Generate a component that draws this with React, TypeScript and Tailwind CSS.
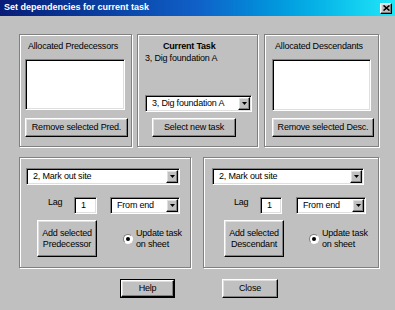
import React from 'react';

const sunken =
  'bg-white border border-t-[#808080] border-l-[#808080] border-r-white border-b-white shadow-[inset_1px_1px_0_#000,inset_-1px_-1px_0_#dfdfdf]';
const raised =
  'bg-[#c0c0c0] border border-t-white border-l-white border-r-black border-b-black shadow-[inset_-1px_-1px_0_#808080,inset_1px_1px_0_#dfdfdf]';
const frame = 'border border-[#808080] shadow-[inset_1px_1px_0_#fff,1px_1px_0_#fff]';

const Combo = ({ value, className }: { value: string; className: string }) => (
  <div className={`${sunken} flex items-stretch p-[1px] ${className}`}>
    <span className="flex-1 pl-[5px] flex items-center whitespace-nowrap overflow-hidden">{value}</span>
    <span className={`${raised} w-[12px] flex items-center justify-center`}>
      <svg width="5" height="3" viewBox="0 0 5 3">
        <path d="M0 0h5L2.5 3z" fill="#000" />
      </svg>
    </span>
  </div>
);

const Button = ({ label, className }: { label: React.ReactNode; className: string }) => (
  <div className={`${raised} flex items-center justify-center text-center leading-[11px] ${className}`}>
    {label}
  </div>
);

const Radio = () => (
  <span className="w-[10px] h-[10px] rounded-full bg-white border border-t-[#808080] border-l-[#808080] border-r-white border-b-white flex items-center justify-center shrink-0">
    <span className="w-[4px] h-[4px] rounded-full bg-black" />
  </span>
);

const AddBlock = ({
  kind,
  pads,
}: {
  kind: string;
  pads: { combo: string; comboW: string; lag: string; box: string; gap: string; btn: string; radio: string };
}) => (
  <div className="flex flex-col">
    <Combo value="2, Mark out site" className={`mt-[10px] h-[17px] ${pads.combo} ${pads.comboW}`} />
    <div className="flex items-start mt-[12px]">
      <span className={`${pads.lag} w-[26px] leading-[11px]`}>Lag</span>
      <div className={`${sunken} ${pads.box} h-[17px] flex items-center pl-[6px]`}>1</div>
      <Combo value="From end" className={`${pads.gap} w-[70px] h-[17px]`} />
    </div>
    <div className="flex items-center mt-[6px]">
      <Button
        label={
          <span>
            Add selected
            <br />
            {kind}
          </span>
        }
        className={`${pads.btn} w-[60px] h-[37px]`}
      />
      <span className={pads.radio}>
        <Radio />
      </span>
      <span className="ml-[3px] leading-[11px] mt-[1px]">
        Update task
        <br />
        on sheet
      </span>
    </div>
  </div>
);

export default function App() {
  return (
    <div className="w-[395px] h-[310px] bg-[#c0c0c0] overflow-hidden font-['Liberation_Sans',Arial,sans-serif] text-[9px] tracking-[-0.2px] text-black">
      <div className="h-[16px] flex items-center justify-between bg-linear-to-r from-[#081c78] via-[#1060c8] to-[#20e8f8]">
        <span className="pl-[4px] text-white font-bold tracking-normal">Set dependencies for current task</span>
        <span className={`${raised} w-[12px] h-[11px] mr-[3px] flex items-center justify-center`}>
          <svg width="7" height="6" viewBox="0 0 7 6">
            <path d="M0.5 0.5L6.5 5.5M6.5 0.5L0.5 5.5" stroke="#000" strokeWidth="1.6" />
          </svg>
        </span>
      </div>

      <div className="pl-[19px] pt-[18px]">
        <div className="flex">
          <div className={`${frame} w-[113px] h-[113px] flex flex-col`}>
            <div className="mt-[6px] leading-[11px] text-center pr-[5px]">Allocated Predecessors</div>
            <div className={`${sunken} mt-[7px] ml-[5px] w-[100px] h-[51px]`} />
            <Button label="Remove selected Pred." className="mt-[8px] ml-[5px] w-[103px] h-[19px]" />
          </div>

          <div className={`${frame} ml-[5px] w-[121px] h-[113px] flex flex-col`}>
            <div className="mt-[6px] ml-[25px] leading-[11px] font-bold">Current Task</div>
            <div className="mt-[1px] ml-[7px] leading-[11px]">3, Dig foundation A</div>
            <Combo value="3, Dig foundation A" className="mt-[31px] ml-[7px] w-[107px] h-[17px]" />
            <Button label="Select new task" className="mt-[6px] ml-[14px] w-[84px] h-[19px]" />
          </div>

          <div className={`${frame} ml-[6px] w-[115px] h-[113px] flex flex-col`}>
            <div className="mt-[6px] leading-[11px] text-center pr-[5px]">Allocated Descendants</div>
            <div className={`${sunken} mt-[7px] ml-[7px] w-[99px] h-[52px]`} />
            <Button label="Remove selected Desc." className="mt-[7px] ml-[7px] w-[102px] h-[19px]" />
          </div>
        </div>

        <div className="flex mt-[10px]">
          <div className={`${frame} w-[172px] h-[111px]`}>
            <AddBlock
              kind="Predecessor"
              pads={{
                combo: 'ml-[6px]',
                comboW: 'w-[154px]',
                lag: 'ml-[28px]',
                box: 'w-[23px]',
                gap: 'ml-[13px]',
                btn: 'ml-[17px]',
                radio: 'ml-[26px]',
              }}
            />
          </div>
          <div className={`${frame} ml-[12px] w-[176px] h-[111px]`}>
            <AddBlock
              kind="Descendant"
              pads={{
                combo: 'ml-[8px]',
                comboW: 'w-[152px]',
                lag: 'ml-[30px]',
                box: 'w-[22px]',
                gap: 'ml-[14px]',
                btn: 'ml-[20px]',
                radio: 'ml-[25px]',
              }}
            />
          </div>
        </div>
      </div>

      <div className="flex mt-[11px] pl-[120px]">
        <div className="border border-black">
          <Button label="Help" className="w-[53px] h-[17px]" />
        </div>
        <Button label="Close" className="ml-[47px] w-[56px] h-[19px]" />
      </div>
    </div>
  );
}
